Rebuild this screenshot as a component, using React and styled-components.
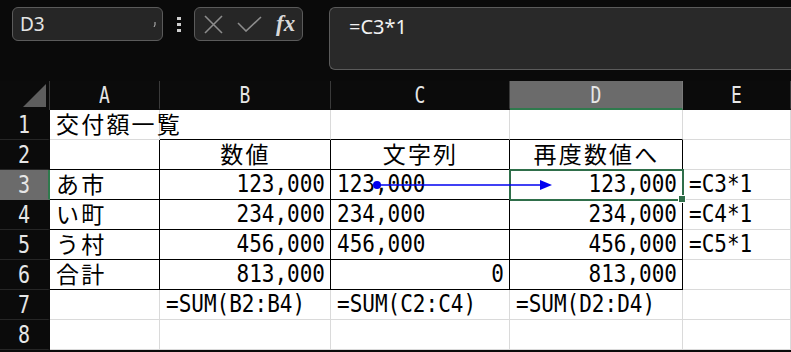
import React from "react";
import styled, { createGlobalStyle } from "styled-components";

const GlobalStyle = createGlobalStyle`
  html, body {
    margin: 0;
    padding: 0;
    background: #0a0a0a;
    overflow: hidden;
  }
  body {
    width: 791px;
    height: 352px;
  }
`;

const COLS = ["A", "B", "C", "D", "E"];
const WIDTHS = [50, 110, 171, 179, 173, 108];

// [text, align]
const DATA = [
  [["交付額一覧", "l"], ["", "l"], ["", "l"], ["", "l"], ["", "l"]],
  [["", "l"], ["数値", "c"], ["文字列", "c"], ["再度数値へ", "c"], ["", "l"]],
  [["あ市", "l"], ["123,000", "r"], ["123,000", "l"], ["123,000", "r"], ["=C3*1", "l"]],
  [["い町", "l"], ["234,000", "r"], ["234,000", "l"], ["234,000", "r"], ["=C4*1", "l"]],
  [["う村", "l"], ["456,000", "r"], ["456,000", "l"], ["456,000", "r"], ["=C5*1", "l"]],
  [["合計", "l"], ["813,000", "r"], ["0", "r"], ["813,000", "r"], ["", "l"]],
  [["", "l"], ["=SUM(B2:B4)", "l"], ["=SUM(C2:C4)", "l"], ["=SUM(D2:D4)", "l"], ["", "l"]],
  [["", "l"], ["", "l"], ["", "l"], ["", "l"], ["", "l"]],
];

const isJp = (s) => /[\u3040-\u30ff\u4e00-\u9fff]/.test(s);

// black table borders
const blackBottom = (r, c) =>
  (r === 0 && c >= 1 && c <= 3) || (r >= 1 && r <= 5 && c <= 3);
const blackRight = (r, c) => r >= 1 && r <= 5 && c <= 3;

const Page = styled.div`
  display: flex;
  flex-direction: column;
  gap: 11px;
  padding-top: 7px;
`;

const Toolbar = styled.div`
  display: flex;
  align-items: flex-start;
  padding-left: 12px;
  height: 63px;
`;

const NameBox = styled.div`
  box-sizing: border-box;
  width: 151px;
  height: 34px;
  border: 1px solid #5b5b5b;
  border-radius: 6px;
  background: #262626;
  display: flex;
  align-items: center;
  justify-content: space-between;
  padding: 0 6px 0 7px;
  font-family: "Noto Sans", sans-serif;
  font-size: 19px;
  color: #e4e4e4;
`;

const Dots = styled.div`
  width: 31px;
  height: 34px;
  display: flex;
  flex-direction: column;
  align-items: center;
  justify-content: center;
  gap: 3px;
  span {
    width: 4px;
    height: 3px;
    background: #cfcfcf;
  }
`;

const FxBox = styled.div`
  box-sizing: border-box;
  width: 109px;
  height: 34px;
  border: 1px solid #5b5b5b;
  border-radius: 6px;
  background: #262626;
  display: flex;
  align-items: center;
  gap: 14px;
  padding-left: 9px;
`;

const Fx = styled.span`
  font-family: "Liberation Serif", serif;
  font-style: italic;
  font-weight: bold;
  font-size: 23px;
  color: #d8d8d8;
`;

const FormulaBar = styled.div`
  box-sizing: border-box;
  flex: 1;
  margin-left: 26px;
  height: 63px;
  border: 1px solid #5b5b5b;
  border-right: none;
  border-radius: 6px 0 0 6px;
  background: #292929;
  padding: 5px 0 0 19px;
  font-family: "Noto Sans", sans-serif;
  font-size: 20px;
  color: #f2f2f2;
`;

const Sheet = styled.div`
  position: relative;
  display: grid;
  grid-template-columns: ${WIDTHS.map((w) => w + "px").join(" ")};
  grid-template-rows: 29px repeat(8, 30px);
  background: #ffffff;
`;

const Corner = styled.div`
  background: #0b0b0b;
  display: flex;
  align-items: flex-end;
  justify-content: flex-end;
  padding: 0 3px 3px 0;
  border-right: 1px solid #3a3a3a;
`;

const Tall = styled.span`
  display: inline-block;
  transform: scaleY(${(p) => p.$k || 1.15});
  transform-origin: 50% 70%;
`;

const ColHead = styled.div`
  box-sizing: border-box;
  background: ${(p) => (p.$active ? "#6b6b6b" : "#0b0b0b")};
  border-right: 1px solid ${(p) => (p.$active ? "#7a7a7a" : "#3a3a3a")};
  border-bottom: 2px solid ${(p) => (p.$active ? "#2f7a4d" : "#0b0b0b")};
  color: #e6e6e6;
  font-family: "DejaVu Sans Mono", monospace;
  font-size: 18px;
  display: flex;
  align-items: center;
  justify-content: center;
  padding-top: 2px;
`;

const RowHead = styled.div`
  box-sizing: border-box;
  background: ${(p) => (p.$active ? "#6b6b6b" : "#0b0b0b")};
  border-bottom: 1px solid ${(p) => (p.$active ? "#6b6b6b" : "#262626")};
  border-right: 2px solid ${(p) => (p.$active ? "#2f7a4d" : "#0b0b0b")};
  color: #e6e6e6;
  font-family: "DejaVu Sans Mono", monospace;
  font-size: 20px;
  display: flex;
  align-items: center;
  justify-content: center;
  padding-top: 2px;
`;

const Cell = styled.div`
  box-sizing: border-box;
  position: relative;
  border-right: 1px solid ${(p) => (p.$br ? "#000" : "#dadada")};
  border-bottom: 1px solid ${(p) => (p.$bb ? "#000" : "#dadada")};
  font-family: "DejaVu Sans Mono", "Noto Sans CJK JP", monospace;
  font-size: ${(p) => (p.$jp ? "23px" : "21px")};
  letter-spacing: ${(p) => (p.$jp ? "2.2px" : "0")};
  color: #000;
  white-space: nowrap;
  line-height: 28px;
  padding: 1px 5px 0 6px;
  text-align: ${(p) => ({ l: "left", r: "right", c: "center" }[p.$align])};
  ${(p) =>
    p.$selected &&
    `
    outline: 2px solid #2f6e4a;
    outline-offset: -1px;
  `}
`;

const FillHandle = styled.span`
  position: absolute;
  right: -4px;
  bottom: -4px;
  width: 6px;
  height: 6px;
  background: #2f6e4a;
  border: 1px solid #fff;
  z-index: 2;
`;

const TraceArrow = styled.svg`
  position: absolute;
  left: 370px;
  top: 96px;
  pointer-events: none;
`;

const SelectAllIcon = () => (
  <svg width="23" height="23" viewBox="0 0 23 23">
    <polygon points="23,0 23,23 0,23" fill="#5e5e5e" />
  </svg>
);

const CancelIcon = () => (
  <svg width="19" height="19" viewBox="0 0 19 19">
    <path d="M1 1 L18 18 M18 1 L1 18" stroke="#8c8c8c" strokeWidth="1.6" fill="none" />
  </svg>
);

const EnterIcon = () => (
  <svg width="25" height="16" viewBox="0 0 25 16">
    <path d="M1 7 L9 15 L24 1" stroke="#8c8c8c" strokeWidth="1.6" fill="none" />
  </svg>
);

export default function App() {
  return (
    <>
      <GlobalStyle />
      <Page>
        <Toolbar>
          <NameBox>
            <span>D3</span>
            <svg width="3" height="5" viewBox="0 0 3 5">
              <path d="M2 0 L2 3 L1 5" stroke="#bbb" strokeWidth="1" fill="none" />
            </svg>
          </NameBox>
          <Dots>
            <span />
            <span />
            <span />
          </Dots>
          <FxBox>
            <CancelIcon />
            <EnterIcon />
            <Fx>fx</Fx>
          </FxBox>
          <FormulaBar>=C3*1</FormulaBar>
        </Toolbar>

        <Sheet>
          <Corner>
            <SelectAllIcon />
          </Corner>
          {COLS.map((c) => (
            <ColHead key={c} $active={c === "D"}>
              <Tall $k={1.25}>{c}</Tall>
            </ColHead>
          ))}
          {DATA.map((row, r) => (
            <React.Fragment key={r}>
              <RowHead $active={r === 2}>
                <Tall $k={1.2}>{r + 1}</Tall>
              </RowHead>
              {row.map(([text, align], c) => {
                const jp = isJp(text);
                return (
                  <Cell
                    key={c}
                    $align={align}
                    $jp={jp}
                    $bb={blackBottom(r, c)}
                    $br={blackRight(r, c)}
                    $selected={r === 2 && c === 3}
                  >
                    {jp || !text ? text : <Tall>{text}</Tall>}
                    {r === 2 && c === 3 && <FillHandle />}
                  </Cell>
                );
              })}
            </React.Fragment>
          ))}
          <TraceArrow width="190" height="16" viewBox="0 0 190 16">
            <circle cx="7" cy="8" r="4" fill="#0000f0" />
            <line x1="7" y1="8" x2="172" y2="8" stroke="#0000f0" strokeWidth="1.5" />
            <polygon points="170,3 182,8 170,13" fill="#0000f0" />
          </TraceArrow>
        </Sheet>
      </Page>
    </>
  );
}
